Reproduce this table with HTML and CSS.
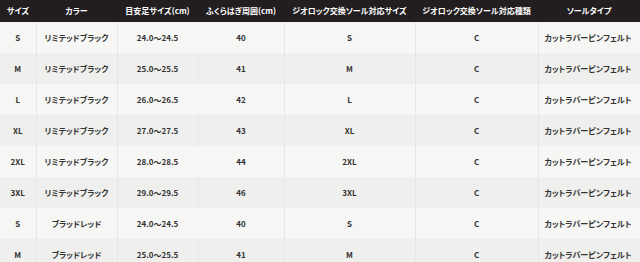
FILE: index.html
```html
<!DOCTYPE html>
<html lang="ja">
<head>
<meta charset="utf-8">
<link rel="stylesheet" href="styles.css">
</head>
<body>
<table class="spec">
  <colgroup>
    <col class="c1"><col class="c2"><col class="c3"><col class="c4"><col class="c5"><col class="c6"><col class="c7">
  </colgroup>
  <thead>
    <tr>
      <th>サイズ</th><th>カラー</th><th>目安足サイズ(cm)</th><th>ふくらはぎ周囲(cm)</th><th>ジオロック交換ソール対応サイズ</th><th>ジオロック交換ソール対応種類</th><th>ソールタイプ</th>
    </tr>
  </thead>
  <tbody>
    <tr><td>S</td><td>リミテッドブラック</td><td>24.0～24.5</td><td>40</td><td>S</td><td>C</td><td class="left">カットラバーピンフェルト</td></tr>
    <tr><td>M</td><td>リミテッドブラック</td><td>25.0～25.5</td><td>41</td><td>M</td><td>C</td><td class="left">カットラバーピンフェルト</td></tr>
    <tr><td>L</td><td>リミテッドブラック</td><td>26.0～26.5</td><td>42</td><td>L</td><td>C</td><td class="left">カットラバーピンフェルト</td></tr>
    <tr><td>XL</td><td>リミテッドブラック</td><td>27.0～27.5</td><td>43</td><td>XL</td><td>C</td><td class="left">カットラバーピンフェルト</td></tr>
    <tr><td>2XL</td><td>リミテッドブラック</td><td>28.0～28.5</td><td>44</td><td>2XL</td><td>C</td><td class="left">カットラバーピンフェルト</td></tr>
    <tr><td>3XL</td><td>リミテッドブラック</td><td>29.0～29.5</td><td>46</td><td>3XL</td><td>C</td><td class="left">カットラバーピンフェルト</td></tr>
    <tr><td>S</td><td>ブラッドレッド</td><td>24.0～24.5</td><td>40</td><td>S</td><td>C</td><td class="left">カットラバーピンフェルト</td></tr>
    <tr><td>M</td><td>ブラッドレッド</td><td>25.0～25.5</td><td>41</td><td>M</td><td>C</td><td class="left">カットラバーピンフェルト</td></tr>
  </tbody>
</table>
</body>
</html>
```
FILE: styles.css
```css
html, body {
  margin: 0;
  padding: 0;
  background: #f6f6f4;
}
.spec {
  width: 640px;
  table-layout: fixed;
  border-collapse: collapse;
  font-family: "Noto Sans CJK JP", "Noto Sans", sans-serif;
  font-feature-settings: "palt";
  font-size: 8px;
  font-weight: 700;
  color: #333333;
}
.c1 { width: 36px; }
.c2 { width: 81px; }
.c3 { width: 81px; }
.c4 { width: 86px; }
.c5 { width: 131px; }
.c6 { width: 123px; }
.c7 { width: 102px; }
.spec th {
  height: 22px;
  padding: 0;
  background: #221e1f;
  color: #ffffff;
  font-weight: 700;
  text-align: center;
  white-space: nowrap;
  line-height: 1;
}
.spec td {
  height: 31px;
  padding: 0;
  text-align: center;
  white-space: nowrap;
  border-right: 1px solid #e6e6e4;
  line-height: 1;
}
.spec td:last-child {
  border-right: 0;
}
.spec tbody tr:nth-child(odd) td:nth-child(3) {
  border-right-color: #f6f6f4;
}
.spec td.left {
  text-align: left;
  padding-left: 6px;
}
.spec tbody tr:nth-child(even) td {
  background: repeating-conic-gradient(#eaeae8 0 25%, #f4f4f2 0 50%) 0 0 / 2px 2px;
}
```
